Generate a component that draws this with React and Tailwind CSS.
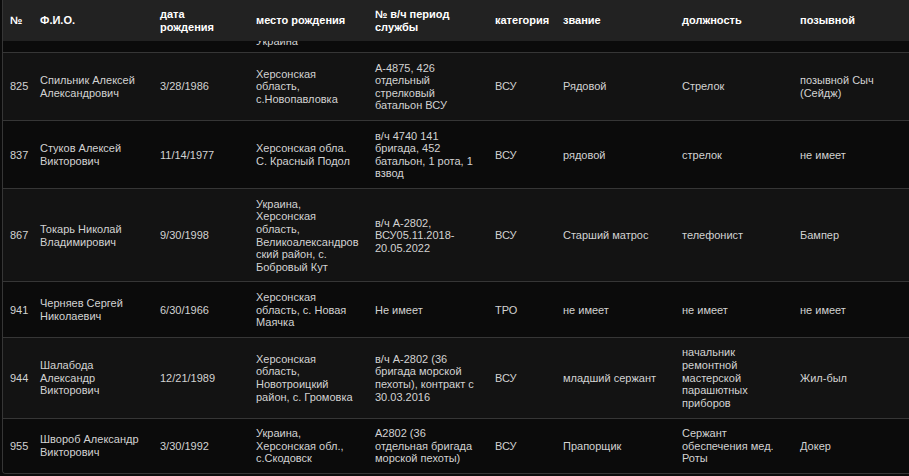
import React from "react";

const COLS = "grid grid-cols-[29px_120px_96px_119px_120px_68px_119px_118px_120px]";

const headers = [
  "№",
  "Ф.И.О.",
  "дата рождения",
  "место рождения",
  "№ в/ч период службы",
  "категория",
  "звание",
  "должность",
  "позывной",
];

const rows = [
  [
    "825",
    "Спильник Алексей Александрович",
    "3/28/1986",
    "Херсонская область, с.Новопавловка",
    "А-4875, 426 отдельный стрелковый батальон ВСУ",
    "ВСУ",
    "Рядовой",
    "Стрелок",
    "позывной Сыч (Сейдж)",
  ],
  [
    "837",
    "Стуков Алексей Викторович",
    "11/14/1977",
    "Херсонская обла. С. Красный Подол",
    "в/ч 4740 141 бригада, 452 батальон, 1 рота, 1 взвод",
    "ВСУ",
    "рядовой",
    "стрелок",
    "не имеет",
  ],
  [
    "867",
    "Токарь Николай Владимирович",
    "9/30/1998",
    "Украина, Херсонская область, Великоалександровский район, с. Бобровый Кут",
    "в/ч А-2802, ВСУ05.11.2018-20.05.2022",
    "ВСУ",
    "Старший матрос",
    "телефонист",
    "Бампер",
  ],
  [
    "941",
    "Черняев Сергей Николаевич",
    "6/30/1966",
    "Херсонская область, с. Новая Маячка",
    "Не имеет",
    "ТРО",
    "не имеет",
    "не имеет",
    "не имеет",
  ],
  [
    "944",
    "Шалабода Александр Викторович",
    "12/21/1989",
    "Херсонская область, Новотроицкий район, с. Громовка",
    "в/ч А-2802 (36 бригада морской пехоты), контракт с 30.03.2016",
    "ВСУ",
    "младший сержант",
    "начальник ремонтной мастерской парашютных приборов",
    "Жил-был",
  ],
  [
    "955",
    "Швороб Александр Викторович",
    "3/30/1992",
    "Украина, Херсонская обл., с.Скодовск",
    "А2802 (36 отдельная бригада морской пехоты)",
    "ВСУ",
    "Прапорщик",
    "Сержант обеспечения мед. Роты",
    "Докер",
  ],
];

export default function App() {
  return (
    <div
      className="h-[476px] w-[909px] overflow-hidden bg-[#0b0b0b] text-[11px] leading-[1.15]"
      style={{ fontFamily: '"Liberation Sans", Arial, sans-serif' }}
    >
      <div className="ml-[2px] w-[962px] border-l border-b border-[#363636] rounded-bl-[4px] overflow-hidden">
        {/* header */}
        <div className={`${COLS} h-[41px] bg-[#222222] text-white font-bold`}>
          {headers.map((h, i) => (
            <div key={i} className={`${i === 0 ? "pl-[7px] pr-0" : "px-2"} flex items-center`}>
              <span>{h}</span>
            </div>
          ))}
        </div>
        {/* partially scrolled row */}
        <div
          className={`${COLS} grid-rows-[11px] h-[12px] overflow-hidden bg-[#0b0b0b] border-b border-[#363636] text-[#d2d2d2]`}
        >
          <div />
          <div />
          <div />
          <div className="px-2 h-[11px] flex flex-col justify-end pb-[4px]">
            <span className="shrink-0">Украина</span>
          </div>
        </div>
        {rows.map((r, ri) => (
          <div
            key={ri}
            className={`${COLS} ${ri % 2 === 0 ? "bg-[#131313]" : "bg-[#0b0b0b]"} ${
              ri === rows.length - 1 ? "" : "border-b border-[#363636]"
            } text-[#d2d2d2]`}
          >
            {r.map((c, ci) => (
              <div
                key={ci}
                className={`${ci === 0 ? "pl-[7px] pr-0 whitespace-nowrap" : "px-2 break-words"} pt-[8.5px] pb-[8px] flex items-center`}
              >
                <span className="min-w-0 break-words">{c}</span>
              </div>
            ))}
          </div>
        ))}
      </div>
    </div>
  );
}
